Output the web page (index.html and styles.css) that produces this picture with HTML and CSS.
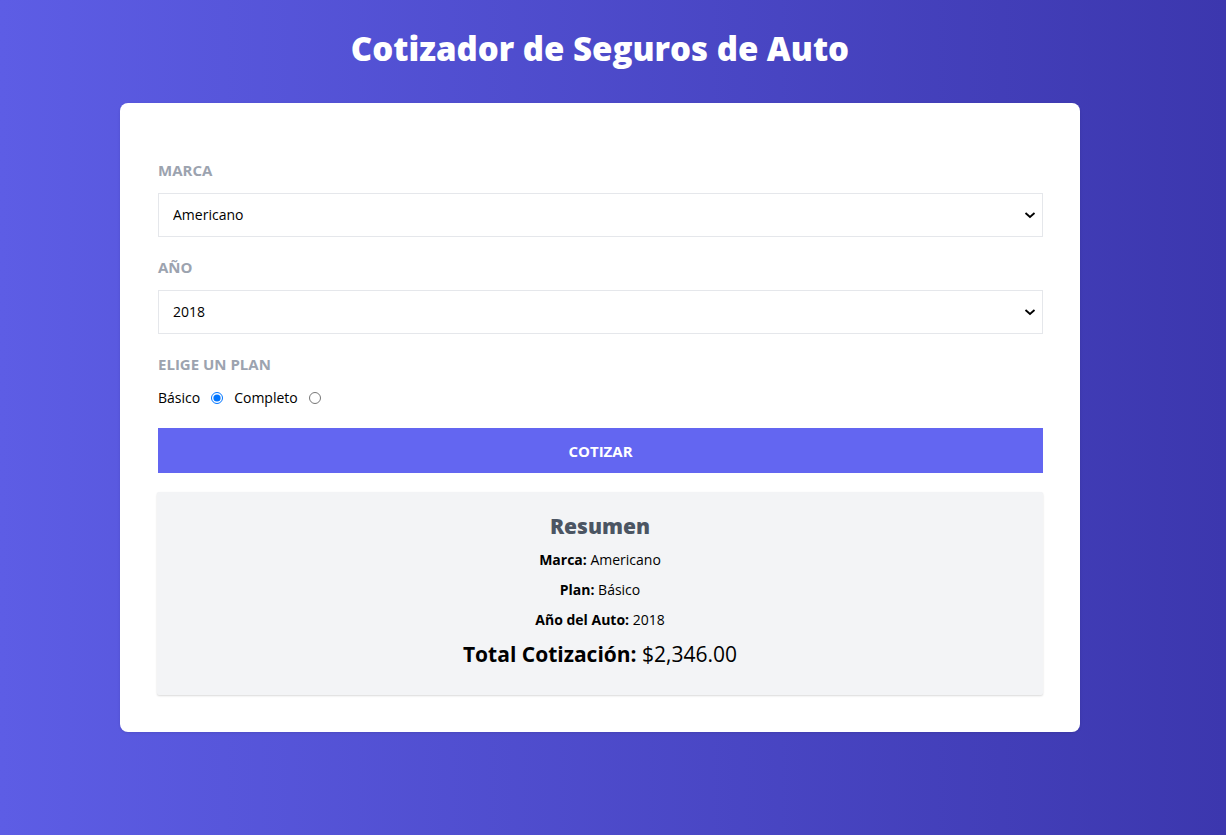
FILE: index.html
```html
<!DOCTYPE html>
<html lang="es">
<head>
  <meta charset="utf-8">
  <meta name="viewport" content="width=device-width, initial-scale=1">
  <title>Cotizador de Seguros de Auto</title>
  <link rel="stylesheet" href="styles.css">
</head>
<body>
  <div class="page">
    <header class="header">
      <h1 class="title">Cotizador de Seguros de Auto</h1>
    </header>
    <main class="card">
      <form class="form">
        <div class="field">
          <label class="label" for="marca">Marca</label>
          <select class="select" id="marca" name="marca">
            <option>Europeo</option>
            <option selected>Americano</option>
            <option>Asiático</option>
          </select>
        </div>
        <div class="field">
          <label class="label" for="year">Año</label>
          <select class="select" id="year" name="year">
            <option>2019</option>
            <option selected>2018</option>
            <option>2017</option>
          </select>
        </div>
        <fieldset class="field plans">
          <legend class="label">Elige un plan</legend>
          <div class="options">
            <label class="option">Básico <input class="radio" type="radio" name="plan" value="1" checked></label>
            <label class="option">Completo <input class="radio" type="radio" name="plan" value="2"></label>
          </div>
        </fieldset>
        <button class="submit" type="button">Cotizar</button>
      </form>
      <section class="summary">
        <h2 class="summary-title">Resumen</h2>
        <p class="line"><strong>Marca:</strong> Americano</p>
        <p class="line"><strong>Plan:</strong> Básico</p>
        <p class="line"><strong>Año del Auto:</strong> 2018</p>
        <p class="total"><strong>Total Cotización:</strong> $2,346.00</p>
      </section>
    </main>
  </div>
</body>
</html>
```
FILE: styles.css
```css
* {
  box-sizing: border-box;
}

body {
  margin: 0;
  min-height: 100vh;
  background: linear-gradient(to right, #5d5de5, #3c37ae);
  color: #000;
  font-family: "Open Sans", "Noto Sans", sans-serif;
  font-size: 14px;
  line-height: 22px;
}

h1, h2, p, fieldset {
  margin: 0;
}

.page {
  padding: 30px 26px 38px 0;
}

.title {
  color: #fff;
  font-size: 33px;
  font-weight: 800;
  line-height: 38px;
  text-align: center;
}

.card {
  max-width: 960px;
  margin: 35px auto 0;
  padding: 56px 37px 37px;
  border-radius: 8px;
  background: #fff;
  box-shadow: 0 1px 3px rgba(0, 0, 0, 0.1);
}

.form {
  display: flex;
  flex-direction: column;
  gap: 19px;
  padding: 0 0 0 1px;
}

.field {
  display: flex;
  flex-direction: column;
  gap: 12px;
}

.label {
  padding: 0;
  color: #9ca3af;
  font-size: 15px;
  font-weight: 700;
  text-transform: uppercase;
}

.select {
  width: 100%;
  height: 44px;
  padding: 0 28px 0 14px;
  border: 1px solid #e5e7eb;
  border-radius: 0;
  appearance: none;
  background: #fff url("data:image/svg+xml,%3Csvg xmlns='http://www.w3.org/2000/svg' width='12' height='8' fill='none' stroke='black' stroke-width='1.8'%3E%3Cpath d='M1.500 2 6 6l4.500-4'/%3E%3C/svg%3E") no-repeat right 6px center;
  color: #000;
  font: inherit;
}

.plans {
  display: block;
  min-width: 0;
  padding: 0;
  border: 0;
}

.options {
  display: flex;
  gap: 11px;
  padding-top: 12px;
}

.option {
  display: flex;
  align-items: center;
  gap: 11px;
}

.radio {
  width: 12px;
  height: 12px;
  margin: 0;
}

.submit {
  height: 45px;
  border: 0;
  background: #6366f1;
  color: #fff;
  font: inherit;
  font-size: 15px;
  font-weight: 700;
  text-transform: uppercase;
}

.summary {
  margin-top: 19px;
  padding: 19px 19px 26px;
  border-radius: 2px;
  background: #f3f4f6;
  box-shadow: 0 1px 2px rgba(0, 0, 0, 0.15);
  text-align: center;
}

.summary-title {
  color: #4b5563;
  font-size: 21px;
  font-weight: 800;
  line-height: 30px;
}

.line {
  margin-top: 8px;
}

.total {
  margin-top: 8px;
  font-size: 21px;
  line-height: 30px;
}
```
